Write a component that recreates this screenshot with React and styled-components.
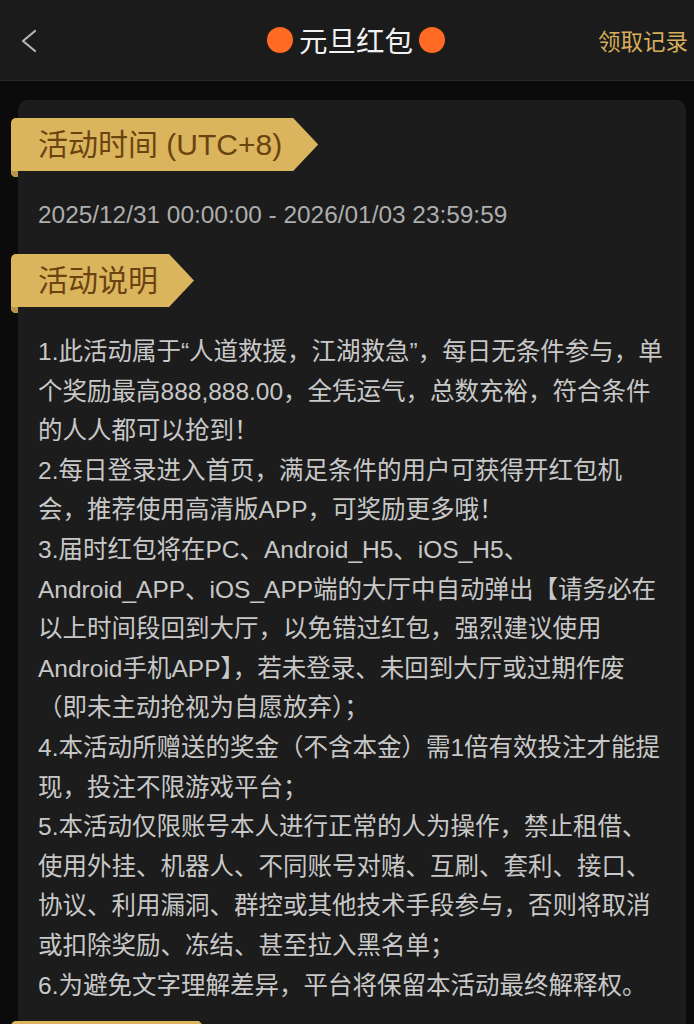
import React from "react";
import styled, { createGlobalStyle } from "styled-components";

const GlobalStyle = createGlobalStyle`
  html, body { margin: 0; padding: 0; background: #0b0b0b; }
  body {
    font-family: "Liberation Sans", "Noto Sans CJK SC", sans-serif;
    -webkit-font-smoothing: antialiased;
  }
  * { box-sizing: border-box; }
`;

const Page = styled.div`
  width: 694px;
  min-height: 1024px;
  background: #0b0b0b;
  overflow: hidden;
`;

const Header = styled.header`
  height: 81px;
  background: #1b1b1b;
  border-bottom: 1px solid #2b2b2b;
  display: grid;
  grid-template-columns: 120px 1fr 120px;
  align-items: center;
  padding: 0 6px 0 20px;
`;

const BackButton = styled.button`
  background: none;
  border: 0;
  padding: 0;
  width: 20px;
  height: 24px;
  display: flex;
  align-items: center;
  cursor: pointer;
  margin-top: 1px;
`;

const Title = styled.h1`
  margin: 0;
  display: flex;
  align-items: center;
  justify-content: center;
  gap: 6px;
  font-size: 28.5px;
  font-weight: 400;
  color: #f2f2f2;
  font-family: "Noto Sans CJK SC", sans-serif;
  line-height: 1;
  transform: translateX(2px);
`;

const Dot = styled.span`
  width: 26px;
  height: 26px;
  border-radius: 50%;
  background: #ff6b22;
  display: inline-block;
`;

const RecordLink = styled.a`
  justify-self: end;
  color: #d6ae5b;
  font-size: 22.5px;
  font-family: "Noto Sans CJK SC", sans-serif;
  text-decoration: none;
  cursor: pointer;
  margin-top: -1px;
`;

const Card = styled.main`
  margin: 19px 8px 0 18px;
  background: #1c1c1c;
  border-radius: 10px;
  padding: 18px 20px 24px 20px;
`;

const Ribbon = styled.div`
  position: relative;
  isolation: isolate;
  display: inline-block;
  margin-left: -27px;
  height: 53px;
  line-height: 53px;
  padding: 0 36px 0 27px;
  font-size: 30px;
  color: #6a4410;
  font-family: "Liberation Sans", "Noto Sans CJK SC", sans-serif;
  white-space: nowrap;

  &::before {
    content: "";
    position: absolute;
    inset: 0;
    z-index: -1;
    background: #dbb55d;
    border-top-left-radius: 5px;
    clip-path: polygon(0 0, calc(100% - 25px) 0, 100% 50%, calc(100% - 25px) 100%, 0 100%);
  }

  &::after {
    content: "";
    position: absolute;
    left: 0;
    top: 100%;
    width: 7px;
    height: 6px;
    background: #b8974c;
    border-bottom-left-radius: 3px;
    clip-path: polygon(0 0, 100% 0, 100% 100%, 40% 100%, 0 60%);
  }
`;

const DateText = styled.p`
  margin: 24px 0 19px;
  font-size: 24.4px;
  line-height: 40px;
  color: #adadad;
`;

const Rules = styled.div`
  margin-top: 25px;
  font-size: 24.5px;
  line-height: 39.6px;
  color: #c8c8c8;
  font-family: "Liberation Sans", "Noto Sans CJK SC", sans-serif;
  line-break: strict;
`;

const Rule = styled.p`
  margin: 0;
`;

const NextRibbon = styled.div`
  margin-top: 16px;
`;

const rules = [
  "1.此活动属于“人道救援，江湖救急”，每日无条件参与，单个奖励最高888,888.00，全凭运气，总数充裕，符合条件的人人都可以抢到！",
  "2.每日登录进入首页，满足条件的用户可获得开红包机会，推荐使用高清版APP，可奖励更多哦！",
  "3.届时红包将在PC、Android_H5、iOS_H5、Android_APP、iOS_APP端的大厅中自动弹出【请务必在以上时间段回到大厅，以免错过红包，强烈建议使用Android手机APP】，若未登录、未回到大厅或过期作废（即未主动抢视为自愿放弃）；",
  "4.本活动所赠送的奖金（不含本金）需1倍有效投注才能提现，投注不限游戏平台；",
  "5.本活动仅限账号本人进行正常的人为操作，禁止租借、使用外挂、机器人、不同账号对赌、互刷、套利、接口、协议、利用漏洞、群控或其他技术手段参与，否则将取消或扣除奖励、冻结、甚至拉入黑名单；",
  "6.为避免文字理解差异，平台将保留本活动最终解释权。",
];

export default function App() {
  return (
    <Page>
      <GlobalStyle />
      <Header>
        <BackButton aria-label="返回">
          <svg width="18" height="24" viewBox="0 0 18 24" fill="none">
            <polyline points="15,2 3,12 15,22" stroke="#b5b5b5" strokeWidth="2.2" strokeLinecap="round" strokeLinejoin="round" />
          </svg>
        </BackButton>
        <Title>
          <Dot />
          元旦红包
          <Dot />
        </Title>
        <RecordLink>领取记录</RecordLink>
      </Header>
      <Card>
        <Ribbon>活动时间 (UTC+8)</Ribbon>
        <DateText>2025/12/31 00:00:00 - 2026/01/03 23:59:59</DateText>
        <Ribbon>活动说明</Ribbon>
        <Rules>
          {rules.map((r) => (
            <Rule key={r}>{r}</Rule>
          ))}
        </Rules>
        <NextRibbon>
          <Ribbon>红包金额表</Ribbon>
        </NextRibbon>
      </Card>
    </Page>
  );
}
